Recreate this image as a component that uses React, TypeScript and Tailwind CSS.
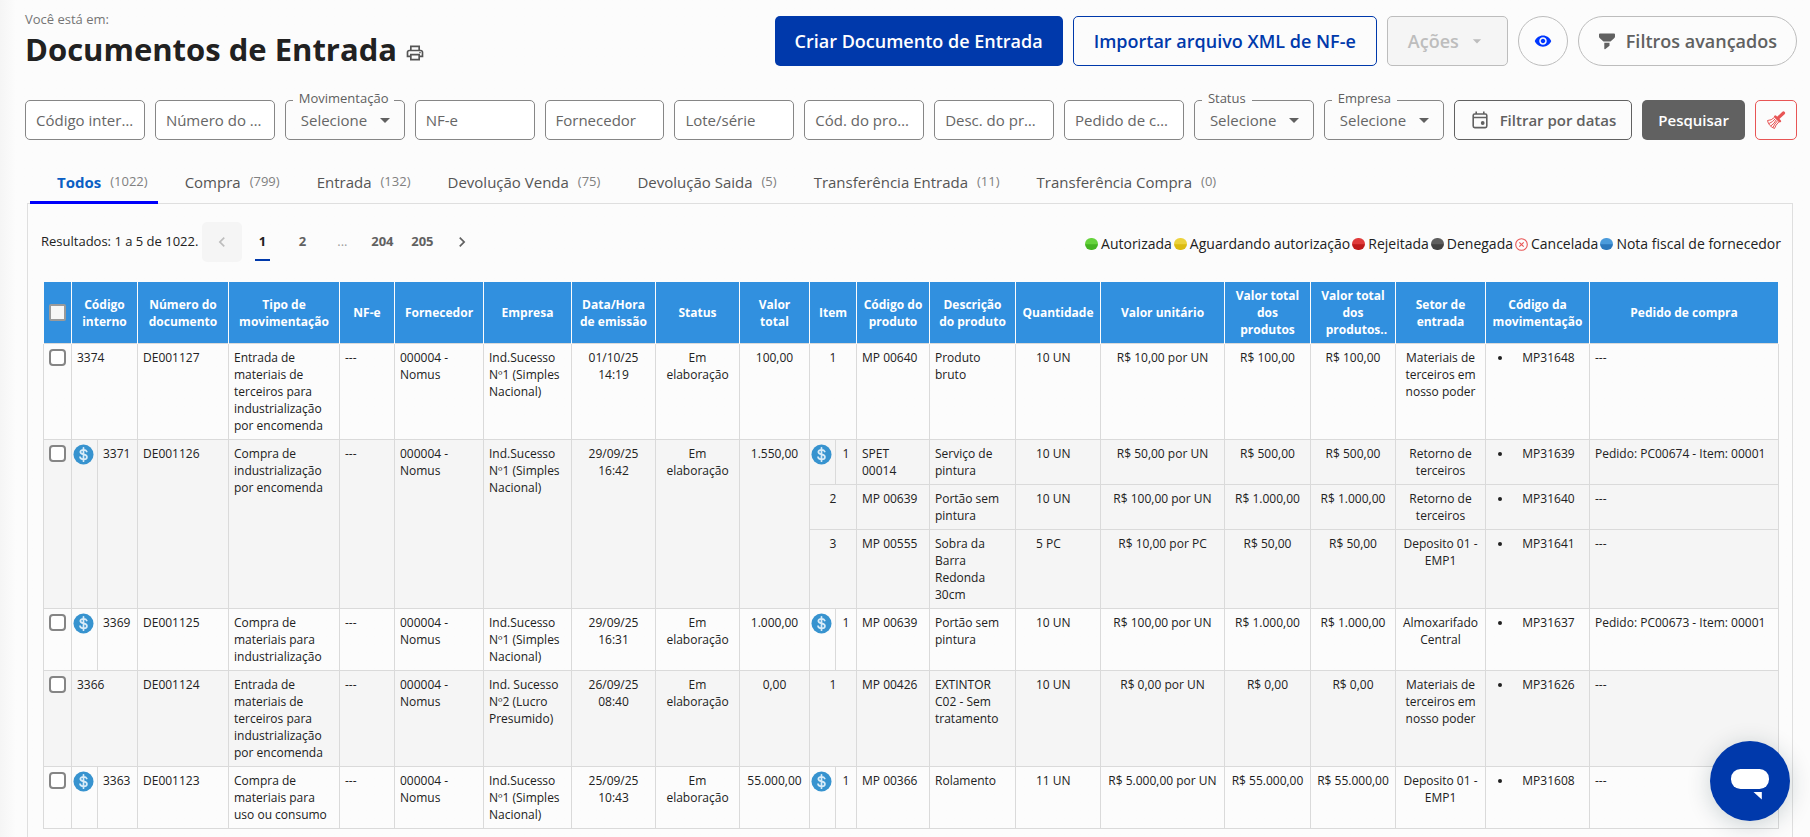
import React, { useState } from "react";
import { MdOutlinePrint, MdVisibility, MdArrowDropDown, MdChevronLeft, MdChevronRight } from "react-icons/md";

type Item = {
  seq: string;
  invoiced?: boolean;
  product: string;
  description: string;
  quantity: string;
  unitPrice: string;
  total: string;
  sector: string;
  movement: string;
  order: string;
};

type Doc = {
  id: string;
  invoiced?: boolean;
  number: string;
  type: string;
  supplier: string;
  company: string;
  date: string;
  status: string;
  total: string;
  items: Item[];
};

const tabs = [
  { name: "Todos", count: 1022 },
  { name: "Compra", count: 799 },
  { name: "Entrada", count: 132 },
  { name: "Devolução Venda", count: 75 },
  { name: "Devolução Saida", count: 5 },
  { name: "Transferência Entrada", count: 11 },
  { name: "Transferência Compra", count: 0 },
];

const docs: Doc[] = [
  {
    id: "3374",
    number: "DE001127",
    type: "Entrada de materiais de terceiros para industrialização por encomenda",
    supplier: "000004 - Nomus",
    company: "Ind.Sucesso Nº1 (Simples Nacional)",
    date: "01/10/25 14:19",
    status: "Em elaboração",
    total: "100,00",
    items: [
      { seq: "1", product: "MP 00640", description: "Produto bruto", quantity: "10 UN", unitPrice: "R$ 10,00 por UN", total: "R$ 100,00", sector: "Materiais de terceiros em nosso poder", movement: "MP31648", order: "---" },
    ],
  },
  {
    id: "3371",
    invoiced: true,
    number: "DE001126",
    type: "Compra de industrialização por encomenda",
    supplier: "000004 - Nomus",
    company: "Ind.Sucesso Nº1 (Simples Nacional)",
    date: "29/09/25 16:42",
    status: "Em elaboração",
    total: "1.550,00",
    items: [
      { seq: "1", invoiced: true, product: "SPET 00014", description: "Serviço de pintura", quantity: "10 UN", unitPrice: "R$ 50,00 por UN", total: "R$ 500,00", sector: "Retorno de terceiros", movement: "MP31639", order: "Pedido: PC00674 - Item: 00001" },
      { seq: "2", product: "MP 00639", description: "Portão sem pintura", quantity: "10 UN", unitPrice: "R$ 100,00 por UN", total: "R$ 1.000,00", sector: "Retorno de terceiros", movement: "MP31640", order: "---" },
      { seq: "3", product: "MP 00555", description: "Sobra da Barra Redonda 30cm", quantity: "5 PC", unitPrice: "R$ 10,00 por PC", total: "R$ 50,00", sector: "Deposito 01 - EMP1", movement: "MP31641", order: "---" },
    ],
  },
  {
    id: "3369",
    invoiced: true,
    number: "DE001125",
    type: "Compra de materiais para industrialização",
    supplier: "000004 - Nomus",
    company: "Ind.Sucesso Nº1 (Simples Nacional)",
    date: "29/09/25 16:31",
    status: "Em elaboração",
    total: "1.000,00",
    items: [
      { seq: "1", invoiced: true, product: "MP 00639", description: "Portão sem pintura", quantity: "10 UN", unitPrice: "R$ 100,00 por UN", total: "R$ 1.000,00", sector: "Almoxarifado Central", movement: "MP31637", order: "Pedido: PC00673 - Item: 00001" },
    ],
  },
  {
    id: "3366",
    number: "DE001124",
    type: "Entrada de materiais de terceiros para industrialização por encomenda",
    supplier: "000004 - Nomus",
    company: "Ind. Sucesso Nº2 (Lucro Presumido)",
    date: "26/09/25 08:40",
    status: "Em elaboração",
    total: "0,00",
    items: [
      { seq: "1", product: "MP 00426", description: "EXTINTOR C02 - Sem tratamento", quantity: "10 UN", unitPrice: "R$ 0,00 por UN", total: "R$ 0,00", sector: "Materiais de terceiros em nosso poder", movement: "MP31626", order: "---" },
    ],
  },
  {
    id: "3363",
    invoiced: true,
    number: "DE001123",
    type: "Compra de materiais para uso ou consumo",
    supplier: "000004 - Nomus",
    company: "Ind.Sucesso Nº1 (Simples Nacional)",
    date: "25/09/25 10:43",
    status: "Em elaboração",
    total: "55.000,00",
    items: [
      { seq: "1", invoiced: true, product: "MP 00366", description: "Rolamento", quantity: "11 UN", unitPrice: "R$ 5.000,00 por UN", total: "R$ 55.000,00", sector: "Deposito 01 - EMP1", movement: "MP31608", order: "---" },
    ],
  },
];

const TextFilter: React.FC<{ label: string }> = ({ label }) => (
  <div className="h-10 min-w-0 flex-1">
    <input
      type="text"
      aria-label={label}
      placeholder={label}
      className="h-full w-full text-ellipsis rounded-[5px] border border-[#868686] bg-white px-[10px] text-[15px] text-[#333] placeholder:text-[#666] placeholder:opacity-100"
    />
  </div>
);

const SelectFilter: React.FC<{ id: string; label: string }> = ({ id, label }) => (
  <div className="relative h-10 min-w-0 flex-1">
    <label htmlFor={id} className="absolute -top-[11px] left-2 bg-[#fcfcfc] px-[6px] text-[13px] leading-[18px] text-[#5f5f5f]">
      {label}
    </label>
    <select id={id} className="h-full w-full appearance-none rounded-[5px] border border-[#868686] pl-[15px] text-[15px] text-[#666]">
      <option>Selecione</option>
    </select>
    <MdArrowDropDown className="pointer-events-none absolute right-2 top-2 size-6 text-[#616161]" />
  </div>
);

const Dot: React.FC<{ from: string; to: string; id: string }> = ({ from, to, id }) => (
  <svg viewBox="0 0 13 12" className="mr-[3px] h-3 w-[13px]">
    <defs>
      <linearGradient id={id} x1="0" y1="0" x2="0" y2="1">
        <stop offset="0" stopColor={from} />
        <stop offset="0.48" stopColor={from} />
        <stop offset="0.56" stopColor={to} />
        <stop offset="1" stopColor={to} />
      </linearGradient>
    </defs>
    <rect width="13" height="12" rx="6" fill={`url(#${id})`} />
  </svg>
);

const DollarIcon: React.FC = () => (
  <svg viewBox="0 0 22 22" className="size-[21px]">
    <circle cx="11" cy="11" r="10.5" fill="#3793cf" />
    <path
      d="M14.4 7.9c-.5-1.2-1.8-1.8-3.4-1.8-1.9 0-3.3.9-3.3 2.4 0 3.4 6.9 1.5 6.9 5 0 1.500-1.500 2.500-3.500 2.500-1.900 0-3.300-.8-3.700-2.200M11 4v14"
      fill="none"
      stroke="#d9ecf8"
      strokeWidth="1.8"
      strokeLinecap="round"
    />
  </svg>
);

const th = "border-x border-[#fcfcfc] border-t-0 border-b-0 p-[5px] font-bold";
const td = "border border-[#dadada] p-[5px]";
const iconTd = "border border-[#dadada] py-1 pl-px pr-0";
const box = "block size-[17px] appearance-none rounded-[4px] border-2 border-[#858585] bg-white checked:bg-[#3190df]";

const DocRows: React.FC<{ doc: Doc; striped: boolean }> = ({ doc, striped }) => {
  const span = doc.items.length;
  return (
    <>
      {doc.items.map((item, i) => (
        <tr key={item.seq} className={striped ? "bg-[#f5f5f5] align-top" : "align-top"}>
          {i === 0 && (
            <>
              <td rowSpan={span} className={td}>
                <input type="checkbox" aria-label={`Selecionar ${doc.id}`} className={box} />
              </td>
              {doc.invoiced && <td rowSpan={span} className={iconTd}><DollarIcon /></td>}
              <td rowSpan={span} colSpan={doc.invoiced ? 1 : 2} className={td}>{doc.id}</td>
              <td rowSpan={span} className={td}>{doc.number}</td>
              <td rowSpan={span} className={td}>{doc.type}</td>
              <td rowSpan={span} className={td}>---</td>
              <td rowSpan={span} className={td}>{doc.supplier}</td>
              <td rowSpan={span} className={td}>{doc.company}</td>
              <td rowSpan={span} className={`${td} text-center`}>{doc.date}</td>
              <td rowSpan={span} className={`${td} text-center`}>{doc.status}</td>
              <td rowSpan={span} className={`${td} text-center`}>{doc.total}</td>
            </>
          )}
          {item.invoiced && <td className={iconTd}><DollarIcon /></td>}
          <td colSpan={item.invoiced ? 1 : 2} className={`${td} text-center`}>{item.seq}</td>
          <td className={td}>{item.product}</td>
          <td className={td}>{item.description}</td>
          <td className="border border-[#dadada] py-[5px] pl-5">{item.quantity}</td>
          <td className={`${td} whitespace-nowrap text-center`}>{item.unitPrice}</td>
          <td className="whitespace-nowrap border border-[#dadada] py-[5px] text-center">{item.total}</td>
          <td className="whitespace-nowrap border border-[#dadada] py-[5px] text-center">{item.total}</td>
          <td className={`${td} text-center`}>{item.sector}</td>
          <td className={td}>
            <ul className="list-disc pl-[22px] text-center">
              <li>{item.movement}</li>
            </ul>
          </td>
          <td className={td}>{item.order}</td>
        </tr>
      ))}
    </>
  );
};

const App: React.FC = () => {
  const [active, setActive] = useState<string>("Todos");

  return (
    <div className="min-h-screen bg-[#fcfcfc] bg-gradient-to-r from-[#f5f5f5] to-[#fcfcfc] to-[16px] pl-[25px] pr-[13px] pt-2 font-['Open_Sans',sans-serif] text-[#212121]">
      {/* Title and page actions */}
      <header className="flex items-start justify-between">
        <div>
          <p className="text-[13px] leading-[22px] text-[#757575]">Você está em:</p>
          <div className="flex items-center gap-2">
            <h1 className="text-[31px] font-bold leading-[38px]">Documentos de Entrada</h1>
            <button type="button" aria-label="Imprimir" className="mt-2 text-[#555]">
              <MdOutlinePrint className="size-5" />
            </button>
          </div>
        </div>

        <div className="flex gap-[10px] pt-2 text-lg font-semibold">
          <button type="button" className="h-[50px] rounded-[5px] bg-[#0039ab] px-5 text-white">Criar Documento de Entrada</button>
          <button type="button" className="h-[50px] rounded-[5px] border border-[#0039ab] px-5 text-[#0039ab]">Importar arquivo XML de NF-e</button>
          <button type="button" disabled className="flex h-[50px] items-center gap-2 rounded-[5px] border border-[#bdbdbd] bg-[#f5f5f5] px-5 text-[#bdbdbd]">
            Ações
            <MdArrowDropDown className="size-5" />
          </button>
          <button type="button" aria-label="Visualizar" className="flex size-[50px] items-center justify-center rounded-full border border-[#bdbdbd] text-[#0037ff]">
            <MdVisibility className="size-[18px]" />
          </button>
          <button type="button" className="flex h-[50px] items-center gap-[10px] rounded-full border border-[#bdbdbd] px-[19px] text-[#616161]">
            <svg viewBox="0 0 18 18" className="size-[18px]" fill="currentColor">
              <path d="M1 2.500Q1 1.500 2 1.500h14q1 0 1 1v2q0 .8-.6 1.400L12.500 9.500h-7L1.600 5.900Q1 5.300 1 4.500zM6.300 10.800h5.200v2.900L7.400 17q-1.100.600-1.100-.600z" />
            </svg>
            Filtros avançados
          </button>
        </div>
      </header>

      {/* Filters */}
      <form className="mt-8 flex gap-[10px]" onSubmit={(e) => e.preventDefault()}>
        <TextFilter label="Código interno" />
        <TextFilter label="Número do documento" />
        <SelectFilter id="movimentacao" label="Movimentação" />
        <TextFilter label="NF-e" />
        <TextFilter label="Fornecedor" />
        <TextFilter label="Lote/série" />
        <TextFilter label="Cód. do produto" />
        <TextFilter label="Desc. do produto" />
        <TextFilter label="Pedido de compra" />
        <SelectFilter id="status" label="Status" />
        <SelectFilter id="empresa" label="Empresa" />
        <button type="button" className="flex h-10 items-center gap-[10px] rounded-[5px] border border-[#616161] px-[15px] text-[15px] font-semibold text-[#616161]">
          <svg viewBox="0 0 20 20" className="size-5" fill="none" stroke="currentColor" strokeWidth="1.600">
            <rect x="3.200" y="4" width="13.600" height="13.600" rx="1.500" />
            <path d="M3.200 7.500h13.600M6.200 1.500V4M13.800 1.500V4" />
            <circle cx="12.700" cy="13" r="1.900" fill="currentColor" stroke="none" />
          </svg>
          Filtrar por datas
        </button>
        <button type="submit" className="h-10 rounded-[5px] bg-[#616161] px-4 text-[15px] font-semibold text-white">Pesquisar</button>
        <button type="button" aria-label="Limpar filtros" className="flex h-10 w-[42px] shrink-0 items-center justify-center rounded-[5px] border border-[#e85555] text-[#e85555]">
          <svg viewBox="0 0 20 20" className="size-5" fill="none" stroke="currentColor">
            <path d="M17.500 3l-5 4.700" strokeWidth="3.200" strokeLinecap="round" />
            <path d="M9.300 6.700l4.500 4.500" strokeWidth="2.600" strokeLinecap="round" />
            <path d="M8.300 7.500Q5.500 10.500 1.500 10.500Q2.500 16 8.500 18.500Q9.500 15 12.800 12M9.300 8.700Q7 12 3 13.500M10.300 9.700Q8.500 13.500 4.800 16M11.500 10.800Q8.500 14 7 17.500" strokeWidth="1" />
          </svg>
        </button>
      </form>

      {/* Tabs */}
      <div role="tablist" className="ml-[5px] mt-[21px] flex">
        {tabs.map((tab) => (
          <button
            key={tab.name}
            type="button"
            role="tab"
            aria-selected={active === tab.name}
            onClick={() => setActive(tab.name)}
            className={`relative flex h-[42px] items-center gap-[9px] pl-[27px] pr-[10px] text-[15px] ${
              active === tab.name ? "font-bold text-[#0b5fc4]" : "text-[#555]"
            }`}
          >
            {tab.name}
            <span className="text-[13px] font-normal text-[#808080]">({tab.count})</span>
            {active === tab.name && <span className="absolute inset-x-0 -bottom-px h-[3px] bg-[#0000fa]" />}
          </button>
        ))}
      </div>

      <main className="ml-[2px] mr-1 border border-[#dfdfdf] px-[15px] pb-4">
        <div className="flex items-center justify-between pt-[18px]">
          <div className="-ml-[2px] flex items-center text-[13px]">
            <span className="mr-1">Resultados: 1 a 5 de 1022.</span>
            <nav aria-label="Paginação" className="flex font-bold text-[#616161]">
              <button type="button" disabled aria-label="Anterior" className="flex size-10 items-center justify-center rounded-[5px] bg-[#f5f5f5] text-[#bdbdbd]">
                <MdChevronLeft className="size-5" />
              </button>
              <a href="#1" aria-current="page" className="relative flex size-10 items-center justify-center text-[#212121]">
                1
                <span className="absolute bottom-px h-[2px] w-[15px] bg-[#0039ab]" />
              </a>
              <a href="#2" className="flex size-10 items-center justify-center">2</a>
              <span className="flex size-10 items-center justify-center font-normal text-[#9e9e9e]">...</span>
              <a href="#204" className="flex size-10 items-center justify-center">204</a>
              <a href="#205" className="flex size-10 items-center justify-center">205</a>
              <button type="button" aria-label="Próxima" className="flex size-10 items-center justify-center">
                <MdChevronRight className="size-5" />
              </button>
            </nav>
          </div>

          <ul className="-mr-1 mt-1 flex gap-[2px] text-sm">
            <li className="flex items-center"><Dot id="ok" from="#66d33c" to="#45b422" />Autorizada</li>
            <li className="flex items-center"><Dot id="wait" from="#ecd23c" to="#dcbb10" />Aguardando autorização</li>
            <li className="flex items-center"><Dot id="rejected" from="#e03b3b" to="#bf1b1b" />Rejeitada</li>
            <li className="flex items-center"><Dot id="denied" from="#5e5e5e" to="#424242" />Denegada</li>
            <li className="flex items-center">
              <svg viewBox="0 0 13 13" className="mr-[3px] size-[13px]" fill="none" stroke="#e85555" strokeWidth="1.100">
                <circle cx="6.500" cy="6.500" r="5.800" />
                <path d="M4.300 4.300l4.400 4.400M8.700 4.300l-4.400 4.400" />
              </svg>
              Cancelada
            </li>
            <li className="flex items-center"><Dot id="supplier" from="#4b9bdb" to="#2c78bc" />Nota fiscal de fornecedor</li>
          </ul>
        </div>

        <table className="mt-5 w-full table-fixed border-collapse text-xs leading-[17px]">
          <colgroup>
            <col className="w-[28px]" />
            <col className="w-[26px]" />
            <col className="w-[40px]" />
            <col className="w-[91px]" />
            <col className="w-[111px]" />
            <col className="w-[55px]" />
            <col className="w-[89px]" />
            <col className="w-[88px]" />
            <col className="w-[84px]" />
            <col className="w-[84px]" />
            <col className="w-[70px]" />
            <col className="w-[26px]" />
            <col className="w-[21px]" />
            <col className="w-[73px]" />
            <col className="w-[86px]" />
            <col className="w-[85px]" />
            <col className="w-[124px]" />
            <col className="w-[86px]" />
            <col className="w-[85px]" />
            <col className="w-[90px]" />
            <col className="w-[104px]" />
            <col className="w-[189px]" />
          </colgroup>
          <thead className="bg-[#3190df] text-white">
            <tr>
              <th className={th}>
                <input type="checkbox" aria-label="Selecionar todos" className="block size-[17px] appearance-none rounded-[2px] border-2 border-[#9a9a9a] bg-[#f7f7f7]" />
              </th>
              <th colSpan={2} className={th}>Código interno</th>
              <th className={th}>Número do documento</th>
              <th className={th}>Tipo de movimentação</th>
              <th className={th}>NF-e</th>
              <th className={th}>Fornecedor</th>
              <th className={th}>Empresa</th>
              <th className={th}>Data/Hora de emissão</th>
              <th className={th}>Status</th>
              <th className={th}>Valor total</th>
              <th colSpan={2} className={th}>Item</th>
              <th className={th}>Código do produto</th>
              <th className={th}>Descrição do produto</th>
              <th className={th}>Quantidade</th>
              <th className={th}>Valor unitário</th>
              <th className={th}>Valor total dos produtos</th>
              <th className={th}>
                Valor total dos <span className="whitespace-nowrap">produtos<span className="inline-block w-0">..</span></span>
              </th>
              <th className={th}>Setor de entrada</th>
              <th className={th}>Código da movimentação</th>
              <th className={th}>Pedido de compra</th>
            </tr>
          </thead>
          <tbody>
            {docs.map((doc, i) => (
              <DocRows key={doc.id} doc={doc} striped={i % 2 === 1} />
            ))}
          </tbody>
        </table>
      </main>

      {/* Chat launcher */}
      <button type="button" aria-label="Abrir chat" className="fixed bottom-4 right-5 size-20 rounded-full bg-[#0039ab] shadow-[0_4px_24px_rgba(0,40,50,0.2)]">
        <svg viewBox="0 0 80 80" className="size-20" fill="#fff">
          <rect x="21" y="28" width="38" height="20" rx="9.500" />
          <path d="M43.500 51h8.300v7.500z" />
        </svg>
      </button>
    </div>
  );
};

export default App;
